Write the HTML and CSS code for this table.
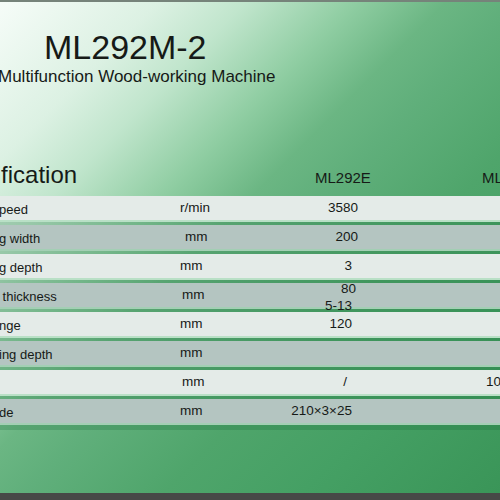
FILE: index.html
```
<!DOCTYPE html>
<html>
<head>
<meta charset="utf-8">
<link rel="stylesheet" href="styles.css">
</head>
<body>
<div class="topline"></div>
<div class="sheet">
  <h1 class="title">ML292M-2</h1>
  <p class="subtitle">Multifunction Wood-working Machine</p>
  <div class="head">
    <div class="head-label"><span class="spec">Specification</span></div>
    <div class="head-model">ML292E</div>
    <div class="head-model">ML292M-2</div>
  </div>
  <div class="table">
    <div class="row light">
      <div class="label">peed</div>
      <div class="unit">r/min</div>
      <div class="val nudge">3580</div>
      <div></div><div></div>
    </div>
    <div class="row dark">
      <div class="label">g width</div>
      <div class="unit shift">mm</div>
      <div class="val nudge">200</div>
      <div></div><div></div>
    </div>
    <div class="row light">
      <div class="label">g depth</div>
      <div class="unit">mm</div>
      <div class="val">3</div>
      <div></div><div></div>
    </div>
    <div class="row dark">
      <div class="label">&nbsp;thickness</div>
      <div class="unit shift-s">mm</div>
      <div class="val two"><span class="l80">80</span><span>5-13</span></div>
      <div></div><div></div>
    </div>
    <div class="row light">
      <div class="label">nge</div>
      <div class="unit">mm</div>
      <div class="val">120</div>
      <div></div><div></div>
    </div>
    <div class="row dark">
      <div class="label">ing depth</div>
      <div class="unit">mm</div>
      <div class="val"></div>
      <div></div><div></div>
    </div>
    <div class="row light">
      <div class="label"></div>
      <div class="unit shift-s">mm</div>
      <div class="val slash">/</div>
      <div></div><div class="last">100</div>
    </div>
    <div class="row dark">
      <div class="label">de</div>
      <div class="unit">mm</div>
      <div class="val">210×3×25</div>
      <div></div><div></div>
    </div>
  </div>
</div>
<div class="bottombar"></div>
</body>
</html>
```
FILE: styles.css
```
html, body {
  margin: 0;
  padding: 0;
  width: 500px;
  height: 500px;
  overflow: hidden;
  font-family: "Liberation Sans", Arial, sans-serif;
  color: #161a17;
}
.topline {
  height: 2px;
  background: #76837a;
}
.sheet {
  height: 491px;
  overflow: hidden;
  background: linear-gradient(135deg,
    #f6fcf8 0%,
    #dcf1e3 16%,
    #c0e5cc 25%,
    #8fcda2 36%,
    #6bb683 45%,
    #60af7b 52%,
    #4fa56b 66%,
    #45a064 80%,
    #3a9558 100%);
}
.bottombar {
  height: 7px;
  background: #474947;
}
.title {
  margin: 25px 0 0 44px;
  font-weight: normal;
  font-size: 34px;
  line-height: 40px;
}
.subtitle {
  margin: 0 0 0 -2px;
  font-size: 17px;
  line-height: 20px;
}
.head {
  margin-top: 74px;
  display: grid;
  grid-template-columns: 315px 167px 1fr;
  align-items: baseline;
  white-space: nowrap;
}
.head-label {
  font-size: 24px;
  line-height: 28px;
}
.spec {
  margin-left: -59px;
}
.head-model {
  font-size: 15px;
  line-height: 20px;
}
.table {
  margin-top: 7px;
  display: flex;
  flex-direction: column;
  gap: 5px;
}
.row {
  height: 24px;
  display: grid;
  grid-template-columns: 180px 100px 72px 130px 1fr;
  font-size: 13.5px;
  line-height: 24px;
  white-space: nowrap;
  border-bottom: 2px solid rgba(150, 215, 170, 0.55);
  margin-bottom: -2px;
  box-shadow: 0 5px 0 rgba(20, 100, 50, 0.22);
}
.light {
  background: #e4ebe8;
}
.dark {
  background: #b4c5c1;
}
.label {
  padding-top: 2px;
  margin-left: -1px;
  font-size: 13px;
}
.unit.shift {
  padding-left: 5px;
}
.unit.shift-s {
  padding-left: 2px;
}
.val {
  text-align: right;
}
.val.nudge {
  margin-right: -6px;
}
.val.slash {
  margin-right: 5px;
}
.val.two {
  display: flex;
  flex-direction: column;
  align-items: flex-end;
  line-height: 17px;
  margin-top: -3px;
}
.l80 {
  margin-right: -4px;
}
.last {
  padding-left: 4px;
}
```
